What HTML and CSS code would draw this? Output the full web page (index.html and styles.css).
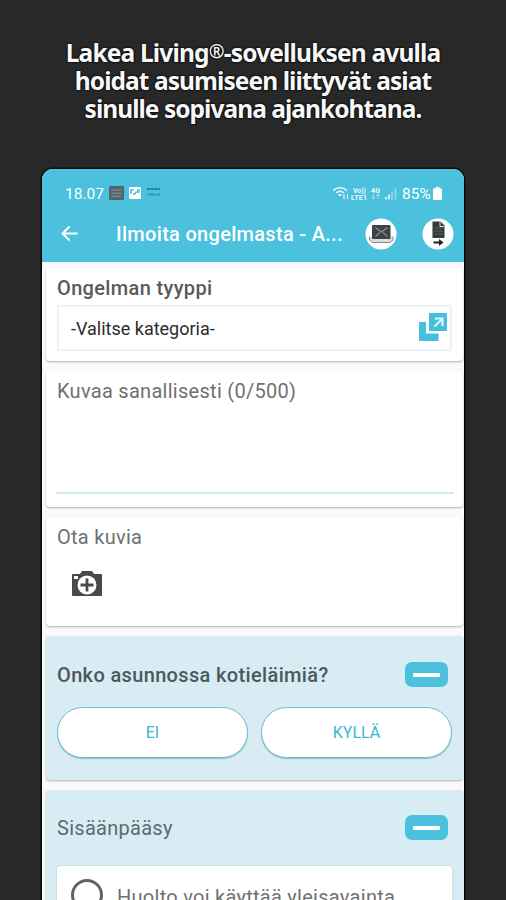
FILE: index.html
```html
<!DOCTYPE html>
<html lang="fi">
<head>
<meta charset="utf-8">
<title>Lakea Living</title>
<link rel="stylesheet" href="styles.css">
</head>
<body>
<h1 class="headline"><span class="l1">Lakea Living<span class="reg">®</span>-sovelluksen avulla</span><span class="l2">hoidat asumiseen liittyvät asiat</span><span class="l3">sinulle sopivana ajankohtana.</span></h1>
<main class="phone">
  <header class="top">
    <div class="status">
      <span class="time">18.07</span>
      <svg class="notes" width="54" height="14" viewBox="0 0 54 14">
        <rect x="0" y="0" width="15" height="14" rx="1" fill="#55636a"/><path d="M2.5 4h10M2.5 7.2h10M2.5 10.3h10" stroke="#87999f" stroke-width="1"/>
        <rect x="20" y="1" width="12" height="12" rx="1" fill="#fff"/><path d="M22 8V4h3M24 8h2l1-2h3V4h-2" fill="none" stroke="#4bc1de" stroke-width="1.5"/>
        <path d="M38 3h13" stroke="#247f9e" stroke-width="2" stroke-dasharray="3 .6"/><path d="M38 8.500h13" stroke="#328eac" stroke-width="1.8" stroke-dasharray="1.5 1 5 .7"/>
      </svg>
      <svg class="signal" width="68" height="15" viewBox="0 0 68 15">
        <g fill="none" stroke="#e9f9fd" stroke-width="1.5"><path d="M0 4.500Q7-.8 14 4.500M3 7Q7 3.500 11 7M5.500 9.500q1.500-1.300 3 0"/><path d="M11 13V8.500M14.500 8v5" stroke-width="1.200"/></g>
        <g class="tiny"><text x="20" y="6.500" textLength="13">Vo))</text><text x="18" y="13.500" textLength="16">LTE1</text><text x="38" y="6.500" textLength="9">4G</text></g>
        <path d="M40.500 8v5M38.800 11l1.700 2 1.700-2M45 13V8m-1.700 2L45 8l1.700 2" fill="none" stroke="#b9e8f3" stroke-width=".8"/>
        <path d="M53 11v2.500M56 8.500v5" stroke="#f0fcff" stroke-width="1.600"/><path d="M59 5.500v8M62.500 2.500v11" stroke="#99dced" stroke-width="1.600"/>
      </svg>
      <span class="battery">85%</span>
      <svg width="9" height="13" viewBox="0 0 9 13"><path d="M2.500 0h4v1.500H9V13H0V1.500h2.500z" fill="#fff"/></svg>
    </div>
    <div class="bar">
      <svg class="back" width="18" height="18" viewBox="0 0 18 18"><path d="M17.500 8.500H2.500M9.500 1.500l-7 7 7 7" fill="none" stroke="#fff" stroke-width="2"/></svg>
      <span class="title">Ilmoita ongelmasta - A...</span>
      <svg class="mail" width="32" height="32" viewBox="0 0 32 32"><circle cx="16" cy="16" r="15.500" fill="#fff"/><path d="M4.500 18.500v3.500l3 2.500h17.500l3-2.500v-3.500" fill="#ddd" stroke="#888" stroke-width="1"/><rect x="7" y="7" width="18.500" height="14" rx="1" fill="#3c4245"/><path d="M10.500 9.500l6 4.500 6-4.500M10.500 18.500l4.500-4M22.500 18.500 18 14.500" fill="none" stroke="#8c9396" stroke-width="1.100"/></svg>
      <svg class="doc" width="32" height="32" viewBox="0 0 32 32"><circle cx="16" cy="16" r="15.500" fill="#fff"/><path d="M10.500 3.500h8l4 4V20h-12z" fill="#35393b"/><path d="M18 4v4.500h4" fill="none" stroke="#ddd" stroke-width="1"/><path d="M12.500 10h8M12.500 13h8M12.500 16h8" stroke="#5b6163" stroke-width="1"/><path d="M11.500 24.500h7" stroke="#222" stroke-width="2.200"/><path d="m17 21 4.500 3.500L17 28z" fill="#222"/></svg>
    </div>
  </header>
  <section class="card type">
    <h2 class="label bold">Ongelman tyyppi</h2>
    <div class="select"><span>-Valitse kategoria-</span>
      <svg width="28" height="28" viewBox="0 0 28 28"><path d="M0 9h7v11.500h12.500V28H0z" fill="#44bfdc"/><path d="M10 0h18v18H10z" fill="#44bfdc"/><path d="M15.500 13.500 23 6M16 5.500h7.500V13" fill="none" stroke="#e5f8fc" stroke-width="2"/></svg>
    </div>
  </section>
  <section class="card describe"><div class="label">Kuvaa sanallisesti (0/500)</div></section>
  <section class="card photos"><div class="label">Ota kuvia</div>
    <svg class="camera" width="30" height="26" viewBox="0 0 30 26"><path d="M1 3h7l2-3h10l2 3h7q1 0 1 1v20q0 1-1 1H1q-1 0-1-1V4q0-1 1-1z" fill="#48494b"/><rect x="2" y="5" width="4" height="3" fill="#fff"/><circle cx="15" cy="14" r="9.500" fill="#fff"/><path d="M15 7.500v13M8.500 14h13" stroke="#48494b" stroke-width="2.800"/></svg>
  </section>
  <section class="card tint pets">
    <div class="row"><h2 class="label bold">Onko asunnossa kotieläimiä?</h2><span class="minus"></span></div>
    <div class="choices"><button>EI</button><button>KYLLÄ</button></div>
  </section>
  <section class="card tint access">
    <div class="row"><div class="label">Sisäänpääsy</div><span class="minus"></span></div>
    <div class="option"><span class="radio"></span><span>Huolto voi käyttää yleisavainta</span></div>
  </section>
</main>
</body>
</html>
```
FILE: styles.css
```css
* { box-sizing: border-box; }
body { margin: 0; width: 506px; height: 900px; overflow: hidden; background: #282828; font-family: Roboto, "Liberation Sans", sans-serif; }
.headline { margin: 0; padding-top: 39px; height: 169px; font: 700 24.5px/28px "Noto Sans", sans-serif; color: #f8f8f8; text-align: center; text-shadow: 0 0 2px #000, 0 0 2px #000; }
.headline > span { display: block; white-space: nowrap; }
.l1 { letter-spacing: -.83px; }
.l2 { letter-spacing: -.93px; }
.l3 { letter-spacing: -.97px; }
.reg { font-size: 19px; line-height: 1; font-weight: 600; vertical-align: 4px; }
.phone { width: 422px; height: 731px; margin-left: 42px; background: #fafafa; border-radius: 11px 11px 0 0; box-shadow: 0 0 0 1.5px #080808; overflow: hidden; }
.top { height: 93px; background: #4bc1de; color: #fff; }
.status { height: 42px; padding: 7px 22px 0 23px; display: flex; align-items: center; font-size: 15.5px; }
.time { width: 44px; white-space: nowrap; }
.notes { margin-top: -1px; }
.signal { margin-left: auto; margin-right: 1px; }
.tiny { font: 700 7px Roboto, sans-serif; fill: #e9f9fd; }
.battery { width: 31px; white-space: nowrap; }
.bar { height: 46px; display: flex; align-items: center; padding: 0 10px 0 18px; }
.title { margin-left: 38px; width: 231px; font-size: 20px; font-weight: 500; letter-spacing: .3px; white-space: nowrap; }
.mail { margin-left: 18px; }
.doc { margin-left: auto; }
.card { margin: 0 1px 10px 4px; padding: 0 11px; background: #fff; border-radius: 4px; box-shadow: 0 1px 2px rgba(0,0,0,.3); overflow: hidden; }
.label { margin: 0; font-size: 20px; font-weight: 400; line-height: 24px; letter-spacing: .28px; color: #707070; white-space: nowrap; }
.bold { font-weight: 500; letter-spacing: .35px; color: #5a5a5a; }
.type { height: 94px; margin-top: 5px; padding-top: 9px; }
.select { height: 46px; margin-top: 5px; padding: 0 3px 0 12px; display: flex; align-items: center; justify-content: space-between; border: 2px solid #e8f4f6; border-radius: 3px; font-size: 18px; color: #2b2b2b; }
.select svg { margin-top: -2px; }
.describe { height: 136px; padding-top: 8px; }
.describe::after { content: ""; display: block; height: 2px; margin: 89px -2px 0 -1px; background: #cfeaf2; }
.photos { height: 109px; padding-top: 8px; }
.camera { display: block; margin: 22px 0 0 15px; }
.tint { background: #d8edf3; }
.pets { height: 144px; padding-top: 26px; }
.row { height: 25px; display: flex; align-items: center; justify-content: space-between; }
.tint .label { color: #5c6a70; }
.tint .bold { color: #4b595f; }
.minus { width: 43px; height: 25px; margin-right: 4px; border-radius: 7px; background: #4bc1de; display: grid; place-items: center; }
.minus::before { content: ""; width: 27px; height: 4px; border-radius: 1px; background: #fff; }
.choices { display: flex; gap: 13px; margin-top: 20px; }
button { flex: none; width: 191px; height: 51px; padding: 0; border: 1px solid #72bcd0; border-radius: 26px; background: #fff; box-shadow: 0 1px 1px rgba(40,120,140,.4); font: 400 16px Roboto, sans-serif; color: #3db5d2; }
.access { height: 150px; padding-top: 25px; }
.option { height: 90px; margin-top: 26px; display: flex; padding: 13px 0 0 14px; border-radius: 3px; background: #fff; box-shadow: 0 0 2px rgba(0,0,0,.2); font-size: 20px; line-height: 37px; letter-spacing: .27px; color: #707070; white-space: nowrap; }
.radio { width: 32px; height: 32px; border: 3px solid #626262; border-radius: 50%; margin-right: 14px; }
```
